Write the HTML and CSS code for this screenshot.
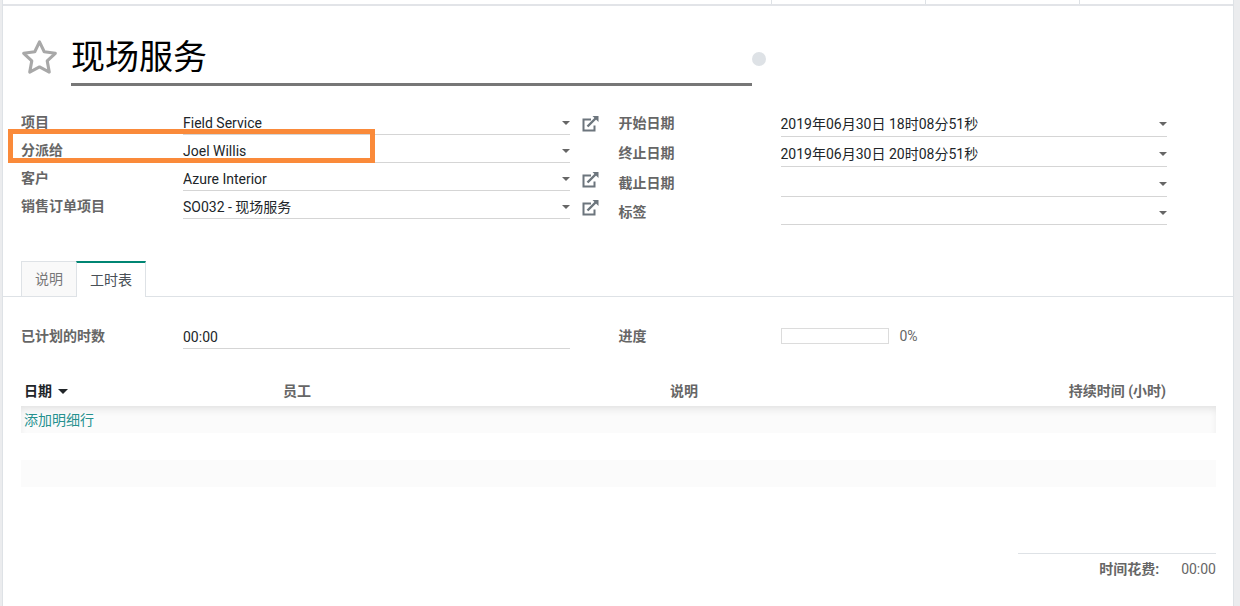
FILE: index.html
```html
<!DOCTYPE html>
<html lang="zh-CN">
<head>
  <meta charset="utf-8" />
  <title>现场服务</title>
  <link rel="stylesheet" href="styles.css">
</head>
<body>
  <svg class="defs" aria-hidden="true">
    <symbol id="external" viewBox="0 0 17 16">
      <path d="M9 3.500H1.500v11h11V9.500" fill="none" stroke="currentColor" stroke-width="2"/>
      <path d="M5.500 10.500L14 2" fill="none" stroke="currentColor" stroke-width="2.400"/>
      <path d="M10.500 0H16.500V6z" fill="currentColor"/>
    </symbol>
  </svg>
  <main class="sheet">
    <div class="button-box"><span></span><span></span><span></span></div>

    <header class="title">
      <button class="star" type="button" aria-label="优先级">
        <svg viewBox="0 0 36 36">
          <path d="M18 2.800L22.600 12.400 33.400 13.900 25.500 21.300 27.500 32.200 18 27.200 8.500 32.200 10.500 21.300 2.600 13.900 13.400 12.400z"/>
        </svg>
      </button>
      <input class="name" type="text" value="现场服务" aria-label="名称">
      <button class="state" type="button" aria-label="状态"></button>
    </header>

    <form class="groups">
      <div class="group">
        <div class="row">
          <label for="project">项目</label>
          <div class="field drop"><select id="project"><option>Field Service</option></select></div>
          <button class="open" type="button" aria-label="打开项目"><svg><use href="#external"/></svg></button>
        </div>
        <div class="row marked">
          <label for="user">分派给</label>
          <div class="field drop"><select id="user"><option>Joel Willis</option></select></div>
        </div>
        <div class="row">
          <label for="partner">客户</label>
          <div class="field drop"><select id="partner"><option>Azure Interior</option></select></div>
          <button class="open" type="button" aria-label="打开客户"><svg><use href="#external"/></svg></button>
        </div>
        <div class="row">
          <label for="order">销售订单项目</label>
          <div class="field drop"><select id="order"><option>SO032 - 现场服务</option></select></div>
          <button class="open" type="button" aria-label="打开销售订单项目"><svg><use href="#external"/></svg></button>
        </div>
      </div>
      <div class="group">
        <div class="row date">
          <label for="start">开始日期</label>
          <div class="field drop"><input id="start" type="text" value="2019年06月30日 18时08分51秒"></div>
        </div>
        <div class="row date">
          <label for="end">终止日期</label>
          <div class="field drop"><input id="end" type="text" value="2019年06月30日 20时08分51秒"></div>
        </div>
        <div class="row date">
          <label for="deadline">截止日期</label>
          <div class="field drop"><input id="deadline" type="text"></div>
        </div>
        <div class="row">
          <label for="tags">标签</label>
          <div class="field drop"><input id="tags" type="text"></div>
        </div>
      </div>
    </form>

    <nav class="tabs">
      <a href="#description">说明</a>
      <a class="active" href="#timesheets">工时表</a>
    </nav>

    <section id="timesheets">
      <div class="groups hours-summary">
        <div class="group">
          <div class="row">
            <label for="planned">已计划的时数</label>
            <div class="field"><input id="planned" type="text" value="00:00"></div>
          </div>
        </div>
        <div class="group">
          <div class="row">
            <label for="progress">进度</label>
            <div class="progress"><progress id="progress" value="0" max="100"></progress><span>0%</span></div>
          </div>
        </div>
      </div>

      <table class="list">
        <thead>
          <tr>
            <th class="sorted">日期</th>
            <th class="employee">员工</th>
            <th class="desc">说明</th>
            <th class="hours">持续时间 (小时)</th>
            <th class="trash"></th>
          </tr>
        </thead>
        <tbody>
          <tr><td colspan="5"><a href="#add">添加明细行</a></td></tr>
          <tr><td colspan="5"></td></tr>
          <tr><td colspan="5"></td></tr>
        </tbody>
      </table>

      <div class="total"><strong>时间花费:</strong><span>00:00</span></div>
    </section>
  </main>
</body>
</html>
```
FILE: styles.css
```css
*, *::before, *::after {
  box-sizing: border-box;
}
body {
  margin: 0;
  padding: 0 6px 0 2px;
  background: #ebecee;
  color: #666;
  font: 14px/20px Roboto, "Noto Sans CJK SC", sans-serif;
}
a {
  text-decoration: none;
}
button {
  padding: 0;
  border: none;
  background: none;
}
input, select {
  font: inherit;
  color: #212529;
  margin: 0;
  padding: 0;
  border: none;
  border-radius: 0;
  background: none;
  appearance: none;
  min-width: 0;
}
.defs {
  display: none;
}
.sheet {
  min-height: 100vh;
  background: #fff;
  border: solid #dee2e6;
  border-width: 0 1px;
}
.button-box {
  display: flex;
  justify-content: flex-end;
  height: 6px;
  border-bottom: 2px solid #e2e4e8;
}
.button-box span {
  width: 154px;
  border-left: 1px solid #dee2e6;
}

/* title */
.title {
  display: flex;
  align-items: center;
  padding: 26px 18px 0;
}
.star {
  width: 37px;
  height: 37px;
  margin: 0 13px 4px 0;
}
.star svg {
  display: block;
  fill: none;
  stroke: #a8a8a8;
  stroke-width: 3;
  stroke-linejoin: round;
}
.name {
  width: 57%;
  height: 54px;
  padding-bottom: 6px;
  border-bottom: 3px solid #777;
  color: #000;
  font-size: 34px;
}
.state {
  width: 14px;
  height: 14px;
  border-radius: 50%;
  background: #dee2e6;
}

/* fields */
.groups {
  display: grid;
  grid-template-columns: 1fr 1fr;
  padding: 21px 17px 0 18px;
}
.row {
  display: grid;
  grid-template-columns: 162px 1fr 49px;
  height: 28px;
  align-items: center;
}
.row.date {
  height: 30px;
}
.row label {
  padding-top: 2px;
  font-weight: bold;
}
.field {
  display: flex;
  align-items: center;
  align-self: stretch;
  padding-top: 4px;
  border-bottom: 1px solid #d5d5d5;
}
.field input, .field select {
  flex: 1;
}
.drop::after {
  content: "";
  border: 4px solid transparent;
  border-top-color: #666;
  border-bottom: none;
}
.open {
  margin: 5px 0 0 12px;
  width: 17px;
  height: 16px;
  color: #6c757d;
}
.open svg {
  display: block;
  width: 17px;
  height: 16px;
}
.marked {
  position: relative;
}
.marked::before {
  content: "";
  position: absolute;
  left: -13px;
  top: -6px;
  width: 367px;
  height: 34px;
  border: 5px solid #fa8a3a;
  pointer-events: none;
}

/* notebook */
.tabs {
  display: flex;
  margin-top: 36px;
  padding-left: 18px;
  border-bottom: 1px solid #dee2e6;
}
.tabs a {
  padding: 7px 13px;
  border: 1px solid #dee2e6;
  border-width: 1px 0 0 1px;
  background: #f9f9f9;
  color: #777;
}
.tabs .active {
  margin-bottom: -1px;
  border-top: 2px solid #008573;
  border-right-width: 1px;
  background: #fff;
  color: #495057;
}
.hours-summary {
  padding-top: 24px;
}
.progress {
  display: flex;
  align-items: center;
  gap: 11px;
  padding-top: 2px;
}
progress {
  appearance: none;
  width: 108px;
  height: 16px;
  border: 1px solid #dcdcdc;
}
progress::-webkit-progress-bar {
  background: #fff;
}

/* timesheet lines */
.list {
  width: calc(100% - 35px);
  margin: 27px 17px 0 18px;
  border-collapse: collapse;
  table-layout: fixed;
}
.list th, .list td {
  height: 27px;
  padding: 0 3px;
  text-align: left;
}
.list th {
  height: 30px;
}
.list .sorted {
  width: 259px;
  color: #212529;
}
.sorted::after {
  content: "";
  display: inline-block;
  margin-left: 6px;
  vertical-align: 2px;
  border: 5px solid transparent;
  border-top-color: #212529;
  border-bottom: none;
}
.list .employee {
  width: 387px;
}
.list .hours {
  padding-right: 0;
  text-align: right;
}
.list .trash {
  width: 50px;
}
.list tbody tr:nth-child(odd) {
  background: #fbfbfb;
}
.list tbody tr:first-child {
  box-shadow: inset 0 5px 9px -3px #ddd;
}
.list a {
  color: #26918f;
}
.total {
  display: flex;
  justify-content: flex-end;
  gap: 22px;
  width: 198px;
  margin: 66px 17px 0 auto;
  padding-top: 5px;
  border-top: 1px solid #dee2e6;
}
```
